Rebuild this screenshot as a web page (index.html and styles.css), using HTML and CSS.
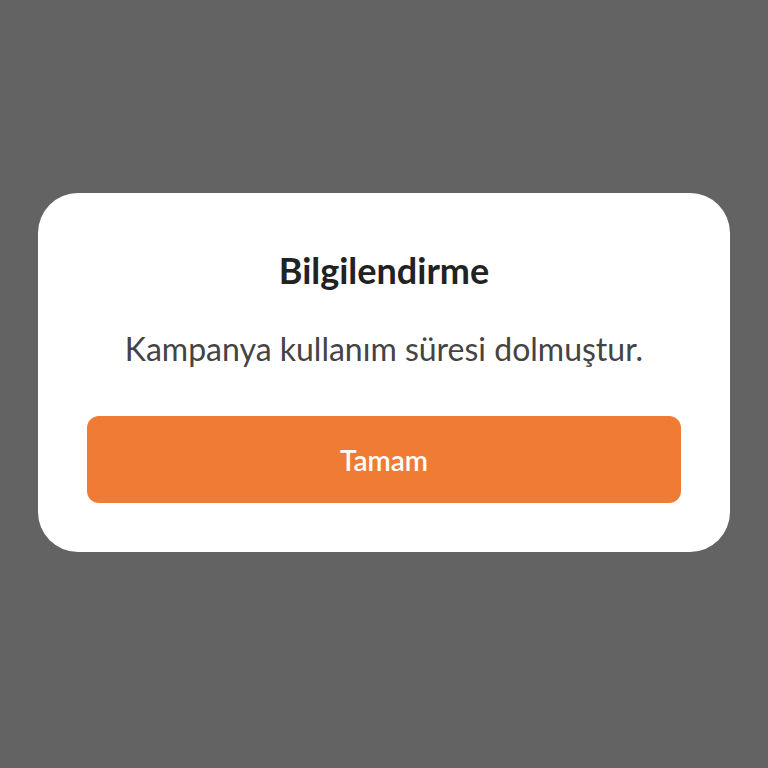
FILE: index.html
```html
<!DOCTYPE html>
<html lang="tr">
<head>
    <meta charset="UTF-8">
    <meta name="viewport" content="width=device-width, initial-scale=1.0">
    <title>Bilgilendirme</title>
    <link rel="stylesheet" href="styles.css">
</head>
<body>
    <div class="dialog">
        <h2 class="dialog-title">Bilgilendirme</h2>
        <p class="dialog-message">Kampanya kullanım süresi dolmuştur.</p>
        <button class="btn-ok" type="button">Tamam</button>
    </div>
</body>
</html>
```

FILE: styles.css
```css
body {
    font-family: Lato, "Noto Sans", sans-serif;
    margin: 0;
    padding: 193px 38px 0;
    background-color: #636363;
    height: 768px;
    box-sizing: border-box;
}
.dialog {
    background-color: #fff;
    border-radius: 40px;
    padding: 55px 49px 49px;
    text-align: center;
}
.dialog-title {
    margin: 0;
    font-size: 36px;
    line-height: 44px;
    font-weight: 700;
    color: #222;
}
.dialog-message {
    margin: 38px 0 48px;
    font-size: 32px;
    line-height: 38px;
    color: #444;
}
.btn-ok {
    display: block;
    width: 100%;
    height: 87px;
    border: none;
    border-radius: 12px;
    background-color: #f07b35;
    color: #fff;
    font-family: inherit;
    font-size: 28px;
    font-weight: 600;
    cursor: pointer;
}
```
